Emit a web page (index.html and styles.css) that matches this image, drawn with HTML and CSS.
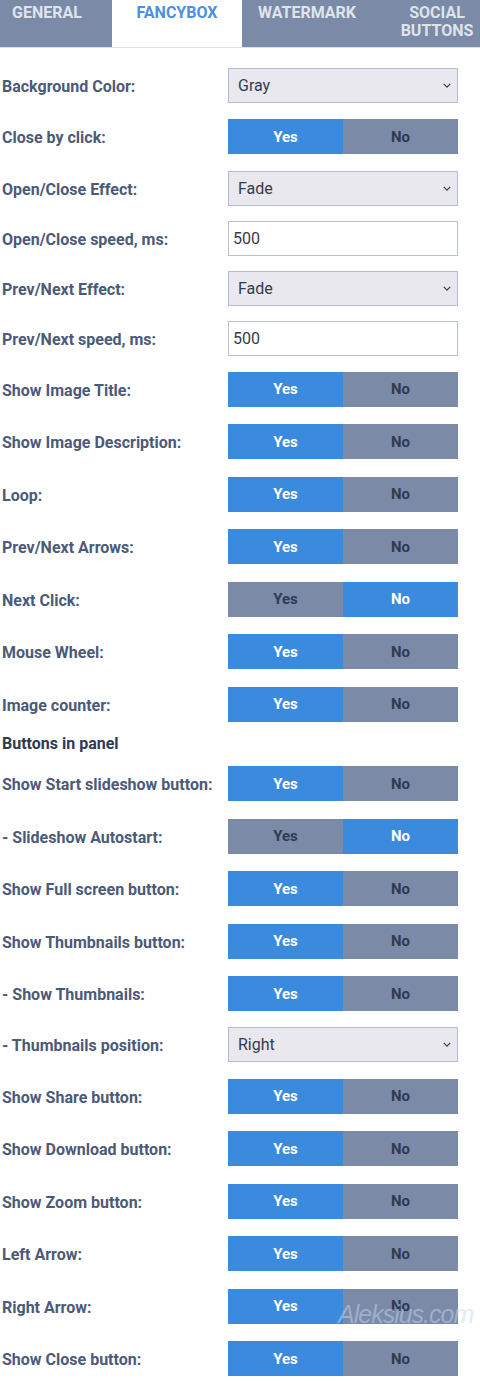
FILE: index.html
```html
<!DOCTYPE html>
<html lang="en">
<head>
    <meta charset="UTF-8">
    <meta name="viewport" content="width=device-width, initial-scale=1.0">
    <title>Fancybox settings</title>
    <link rel="stylesheet" href="styles.css">
</head>
<body>
    <div class="tabs">
        <div class="tab">General</div>
        <div class="tab active">Fancybox</div>
        <div class="tab">Watermark</div>
        <div class="tab">Social buttons</div>
    </div>

    <div class="settings">
        <div class="row">
            <label>Background Color:</label>
            <div class="select"><select><option>Gray</option></select><svg viewBox="0 0 10 6"><path d="M1 1l4 4 4-4"/></svg></div>
        </div>
        <div class="row toggle-row">
            <label>Close by click:</label>
            <div class="toggle"><span class="on">Yes</span><span>No</span></div>
        </div>
        <div class="row">
            <label>Open/Close Effect:</label>
            <div class="select"><select><option>Fade</option></select><svg viewBox="0 0 10 6"><path d="M1 1l4 4 4-4"/></svg></div>
        </div>
        <div class="row">
            <label>Open/Close speed, ms:</label>
            <input type="text" value="500">
        </div>
        <div class="row">
            <label>Prev/Next Effect:</label>
            <div class="select"><select><option>Fade</option></select><svg viewBox="0 0 10 6"><path d="M1 1l4 4 4-4"/></svg></div>
        </div>
        <div class="row">
            <label>Prev/Next speed, ms:</label>
            <input type="text" value="500">
        </div>
        <div class="row toggle-row">
            <label>Show Image Title:</label>
            <div class="toggle"><span class="on">Yes</span><span>No</span></div>
        </div>
        <div class="row toggle-row">
            <label>Show Image Description:</label>
            <div class="toggle"><span class="on">Yes</span><span>No</span></div>
        </div>
        <div class="row toggle-row">
            <label>Loop:</label>
            <div class="toggle"><span class="on">Yes</span><span>No</span></div>
        </div>
        <div class="row toggle-row">
            <label>Prev/Next Arrows:</label>
            <div class="toggle"><span class="on">Yes</span><span>No</span></div>
        </div>
        <div class="row toggle-row">
            <label>Next Click:</label>
            <div class="toggle"><span>Yes</span><span class="on">No</span></div>
        </div>
        <div class="row toggle-row">
            <label>Mouse Wheel:</label>
            <div class="toggle"><span class="on">Yes</span><span>No</span></div>
        </div>
        <div class="row toggle-row">
            <label>Image counter:</label>
            <div class="toggle"><span class="on">Yes</span><span>No</span></div>
        </div>

        <div class="group-title">Buttons in panel</div>

        <div class="row toggle-row">
            <label>Show Start slideshow button:</label>
            <div class="toggle"><span class="on">Yes</span><span>No</span></div>
        </div>
        <div class="row toggle-row">
            <label>- Slideshow Autostart:</label>
            <div class="toggle"><span>Yes</span><span class="on">No</span></div>
        </div>
        <div class="row toggle-row">
            <label>Show Full screen button:</label>
            <div class="toggle"><span class="on">Yes</span><span>No</span></div>
        </div>
        <div class="row toggle-row">
            <label>Show Thumbnails button:</label>
            <div class="toggle"><span class="on">Yes</span><span>No</span></div>
        </div>
        <div class="row toggle-row">
            <label>- Show Thumbnails:</label>
            <div class="toggle"><span class="on">Yes</span><span>No</span></div>
        </div>
        <div class="row">
            <label>- Thumbnails position:</label>
            <div class="select"><select><option>Right</option></select><svg viewBox="0 0 10 6"><path d="M1 1l4 4 4-4"/></svg></div>
        </div>
        <div class="row toggle-row">
            <label>Show Share button:</label>
            <div class="toggle"><span class="on">Yes</span><span>No</span></div>
        </div>
        <div class="row toggle-row">
            <label>Show Download button:</label>
            <div class="toggle"><span class="on">Yes</span><span>No</span></div>
        </div>
        <div class="row toggle-row">
            <label>Show Zoom button:</label>
            <div class="toggle"><span class="on">Yes</span><span>No</span></div>
        </div>
        <div class="row toggle-row">
            <label>Left Arrow:</label>
            <div class="toggle"><span class="on">Yes</span><span>No</span></div>
        </div>
        <div class="row toggle-row">
            <label>Right Arrow:</label>
            <div class="toggle"><span class="on">Yes</span><span>No</span></div>
        </div>
        <div class="row toggle-row">
            <label>Show Close button:</label>
            <div class="toggle"><span class="on">Yes</span><span>No</span></div>
        </div>
    </div>

    <div class="stamp">Aleksius.com</div>
</body>
</html>
```

FILE: styles.css
```css
body { margin: 0; background: #fff; font-family: Roboto, "Liberation Sans", sans-serif; color: #4a5878; position: relative; overflow: hidden; }

/* tab bar */
.tabs { display: flex; height: 47px; background: #7b8aa7; border-bottom: 1px solid #dde1e8; margin-left: -18px; overflow: hidden; }
.tab { flex: 0 0 130px; padding: 4px 10px 0; box-sizing: border-box; text-align: center; text-transform: uppercase; font-weight: bold; font-size: 16px; line-height: 18px; color: #dfe4ec; }
.tab.active { background: #fff; color: #4a90e2; }

/* rows */
.settings { padding: 12.5px 22px 0 2px; }
.row { display: flex; align-items: center; justify-content: space-between; height: 50px; }
.toggle-row { height: 52.5px; }
.row label { font-size: 16px; font-weight: bold; color: #4c5a79; padding-top: 2px; }
.group-title { height: 26.75px; line-height: 26px; font-size: 16px; font-weight: bold; color: #2f3a52; }

.select { position: relative; width: 230px; height: 35px; }
.select select { width: 100%; height: 100%; appearance: none; -webkit-appearance: none; background: #e8e8ee; border: 1px solid #b1bdd0; border-radius: 0; padding: 0 9px; font: 16px Roboto, "Liberation Sans", sans-serif; color: #333c4e; outline: none; }
.select svg { position: absolute; right: 7px; top: 15px; width: 8px; height: 5px; fill: none; stroke: #333c4e; stroke-width: 1.5; }

.row input { width: 230px; height: 35px; box-sizing: border-box; border: 1px solid #b9c1cd; padding: 0 4px; font: 16px Roboto, "Liberation Sans", sans-serif; color: #333c4e; outline: none; }

.toggle { display: flex; width: 230px; height: 35px; }
.toggle span { flex: 1; display: flex; align-items: center; justify-content: center; background: #7b8aa7; color: #2f3a52; font-size: 15px; font-weight: bold; }
.toggle span.on { background: #3a8bde; color: #fff; }

/* faint site mark */
.stamp { position: absolute; left: 338px; top: 1300px; font: italic 25px "Liberation Sans", sans-serif; letter-spacing: -1px; color: rgba(190, 215, 245, 0.5); pointer-events: none; }
```
